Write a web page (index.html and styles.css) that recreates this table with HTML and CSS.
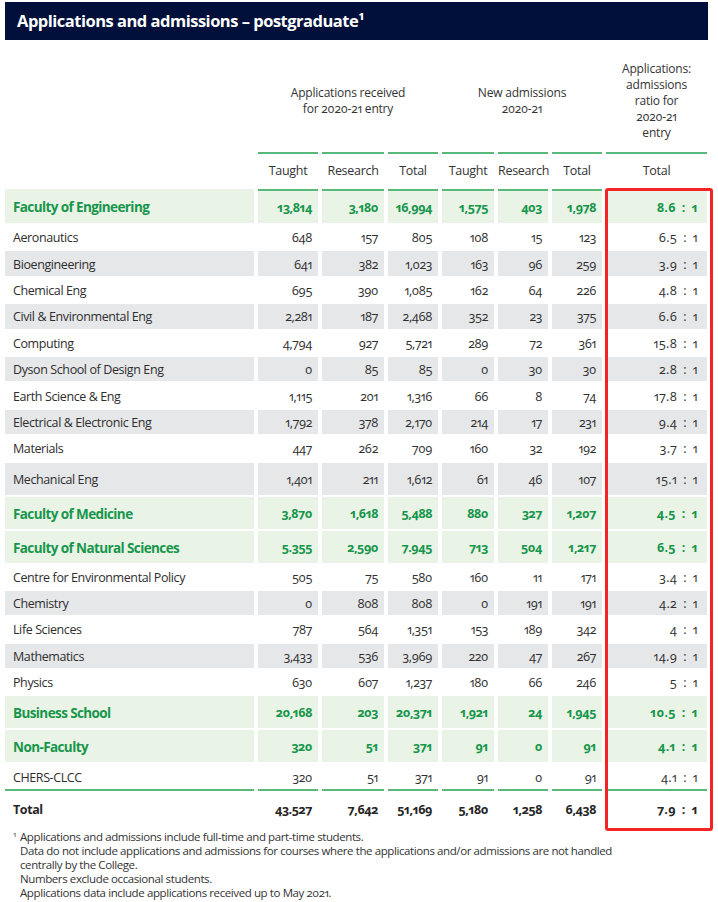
FILE: index.html
```html
<!DOCTYPE html>
<html lang="en">
<head>
<meta charset="utf-8">
<title>Applications and admissions – postgraduate</title>
<link rel="stylesheet" href="styles.css">
</head>
<body>
<div class="page">
  <h1 class="title">Applications and admissions – postgraduate¹</h1>
  <table class="data">
    <colgroup>
      <col class="c-label"><col class="c-1"><col class="c-2"><col class="c-3"><col class="c-4"><col class="c-5"><col class="c-6"><col class="c-7">
    </colgroup>
    <thead>
      <tr class="h-group">
        <th></th>
        <th colspan="3">Applications received<br>for 2020-21 entry</th>
        <th colspan="3">New admissions<br>2020-21</th>
        <th>Applications:<br>admissions<br>ratio for<br>2020-21<br>entry</th>
      </tr>
      <tr class="h-sub">
        <th class="blank"></th>
        <th>Taught</th><th>Research</th><th>Total</th>
        <th>Taught</th><th>Research</th><th>Total</th>
        <th>Total</th>
      </tr>
    </thead>
    <tbody>
      <tr class="fac first"><td>Faculty of Engineering</td><td>13,814</td><td>3,180</td><td>16,994</td><td>1,575</td><td>403</td><td>1,978</td><td class="ratio">8.6 : 1</td></tr>
      <tr><td>Aeronautics</td><td>648</td><td>157</td><td>805</td><td>108</td><td>15</td><td>123</td><td class="ratio">6.5 : 1</td></tr>
      <tr class="gray"><td>Bioengineering</td><td>641</td><td>382</td><td>1,023</td><td>163</td><td>96</td><td>259</td><td class="ratio">3.9 : 1</td></tr>
      <tr><td>Chemical Eng</td><td>695</td><td>390</td><td>1,085</td><td>162</td><td>64</td><td>226</td><td class="ratio">4.8 : 1</td></tr>
      <tr class="gray"><td>Civil &amp; Environmental Eng</td><td>2,281</td><td>187</td><td>2,468</td><td>352</td><td>23</td><td>375</td><td class="ratio">6.6 : 1</td></tr>
      <tr><td>Computing</td><td>4,794</td><td>927</td><td>5,721</td><td>289</td><td>72</td><td>361</td><td class="ratio">15.8 : 1</td></tr>
      <tr class="gray"><td>Dyson School of Design Eng</td><td>0</td><td>85</td><td>85</td><td>0</td><td>30</td><td>30</td><td class="ratio">2.8 : 1</td></tr>
      <tr><td>Earth Science &amp; Eng</td><td>1,115</td><td>201</td><td>1,316</td><td>66</td><td>8</td><td>74</td><td class="ratio">17.8 : 1</td></tr>
      <tr class="gray"><td>Electrical &amp; Electronic Eng</td><td>1,792</td><td>378</td><td>2,170</td><td>214</td><td>17</td><td>231</td><td class="ratio">9.4 : 1</td></tr>
      <tr><td>Materials</td><td>447</td><td>262</td><td>709</td><td>160</td><td>32</td><td>192</td><td class="ratio">3.7 : 1</td></tr>
      <tr class="gray tall"><td>Mechanical Eng</td><td>1,401</td><td>211</td><td>1,612</td><td>61</td><td>46</td><td>107</td><td class="ratio">15.1 : 1</td></tr>
      <tr class="fac"><td>Faculty of Medicine</td><td>3,870</td><td>1,618</td><td>5,488</td><td>880</td><td>327</td><td>1,207</td><td class="ratio">4.5 : 1</td></tr>
      <tr class="fac"><td>Faculty of Natural Sciences</td><td>5.355</td><td>2,590</td><td>7.945</td><td>713</td><td>504</td><td>1,217</td><td class="ratio">6.5 : 1</td></tr>
      <tr><td>Centre for Environmental Policy</td><td>505</td><td>75</td><td>580</td><td>160</td><td>11</td><td>171</td><td class="ratio">3.4 : 1</td></tr>
      <tr class="gray"><td>Chemistry</td><td>0</td><td>808</td><td>808</td><td>0</td><td>191</td><td>191</td><td class="ratio">4.2 : 1</td></tr>
      <tr><td>Life Sciences</td><td>787</td><td>564</td><td>1,351</td><td>153</td><td>189</td><td>342</td><td class="ratio">4 : 1</td></tr>
      <tr class="gray"><td>Mathematics</td><td>3,433</td><td>536</td><td>3,969</td><td>220</td><td>47</td><td>267</td><td class="ratio">14.9 : 1</td></tr>
      <tr><td>Physics</td><td>630</td><td>607</td><td>1,237</td><td>180</td><td>66</td><td>246</td><td class="ratio">5 : 1</td></tr>
      <tr class="fac"><td>Business School</td><td>20,168</td><td>203</td><td>20,371</td><td>1,921</td><td>24</td><td>1,945</td><td class="ratio">10.5 : 1</td></tr>
      <tr class="fac"><td>Non-Faculty</td><td>320</td><td>51</td><td>371</td><td>91</td><td>0</td><td>91</td><td class="ratio">4.1 : 1</td></tr>
      <tr class="last"><td>CHERS-CLCC</td><td>320</td><td>51</td><td>371</td><td>91</td><td>0</td><td>91</td><td class="ratio">4.1 : 1</td></tr>
      <tr class="total"><td>Total</td><td>43.527</td><td>7,642</td><td>51,169</td><td>5,180</td><td>1,258</td><td>6,438</td><td class="ratio">7.9 : 1</td></tr>
    </tbody>
  </table>
  <div class="notes">
    <p class="note"><sup>1</sup>Applications and admissions include full-time and part-time students.</p>
    <p class="note">Data do not include applications and admissions for courses where the applications and/or admissions are not handled<br>centrally by the College.</p>
    <p class="note">Numbers exclude occasional students.</p>
    <p class="note">Applications data include applications received up to May 2021.</p>
  </div>
  <div class="highlight" aria-hidden="true"></div>
</div>
</body>
</html>
```
FILE: styles.css
```css
html, body {
  margin: 0;
  padding: 0;
  background: #ffffff;
}

.page {
  position: relative;
  width: 718px;
  min-height: 902px;
  font-family: "Open Sans", "Noto Sans", "Liberation Sans", sans-serif;
  font-variant-numeric: oldstyle-nums proportional-nums;
  color: #2e2e2e;
}

.title {
  margin: 2px 10px 0 5px;
  height: 38px;
  box-sizing: border-box;
  padding: 0 0 0 12px;
  background: #01103a;
  color: #ffffff;
  font-size: 16.5px;
  font-weight: 700;
  letter-spacing: -0.5px;
  line-height: 37px;
}

.data {
  margin: 8px 0 0 1px;
  width: 710px;
  table-layout: fixed;
  border-collapse: separate;
  border-spacing: 4px 2px;
  font-size: 12.5px;
  letter-spacing: -0.4px;
  line-height: 16px;
}

.c-label { width: 249px; }
.c-1 { width: 60px; }
.c-2 { width: 62px; }
.c-3 { width: 50px; }
.c-4 { width: 52px; }
.c-5 { width: 50px; }
.c-6 { width: 50px; }
.c-7 { width: 101px; }

.data th,
.data td {
  box-sizing: border-box;
  padding: 0;
  vertical-align: middle;
}

.h-group th {
  height: 100px;
  font-weight: 400;
  font-size: 12px;
  letter-spacing: -0.2px;
  text-align: center;
  color: #333333;
  padding-top: 2px;
}

.h-sub th {
  height: 35px;
  border-top: 2px solid #5bb87b;
  font-weight: 400;
  font-size: 12.5px;
  letter-spacing: -0.3px;
  text-align: center;
  color: #333333;
  padding-top: 1px;
}

.h-sub th.blank {
  border-top: none;
}

.data td {
  height: 24.4px;
  text-align: right;
  padding-top: 2px;
  padding-right: 6px;
  white-space: nowrap;
}

.data td:first-child {
  text-align: left;
  padding-left: 8px;
  padding-right: 0;
}

.data td.ratio {
  padding-right: 9px;
  letter-spacing: 0.3px;
  word-spacing: 2.5px;
}

.gray td {
  background: #e6e7e9;
}

.tall td {
  height: 32px;
}

.fac td {
  height: 32px;
  background: #e9f4e7;
  color: #17964b;
  font-weight: 700;
}

.fac td:first-child {
  font-size: 13.5px;
  letter-spacing: -0.6px;
}

.fac.first td {
  height: 34px;
  border-top: 2px solid #5bb87b;
}

.fac.first td:first-child {
  border-top: none;
}

.last td {
  height: 26.4px;
  border-bottom: 2px solid #5bb87b;
}

.total td {
  height: 34px;
  padding-top: 0;
  font-weight: 700;
  color: #262626;
}

.notes {
  margin-top: 1px;
  padding-left: 20px;
  font-size: 11.5px;
  letter-spacing: -0.4px;
  line-height: 14px;
  color: #333333;
  white-space: nowrap;
}

.note {
  margin: 0;
}

.note sup {
  font-size: 8px;
  line-height: 0;
  vertical-align: 4px;
  margin-left: -7px;
  display: inline-block;
  width: 7px;
}

.highlight {
  position: absolute;
  left: 605px;
  top: 186px;
  width: 108px;
  height: 643px;
  box-sizing: border-box;
  border: 3px solid #f52424;
  border-radius: 3px;
  pointer-events: none;
}
```
